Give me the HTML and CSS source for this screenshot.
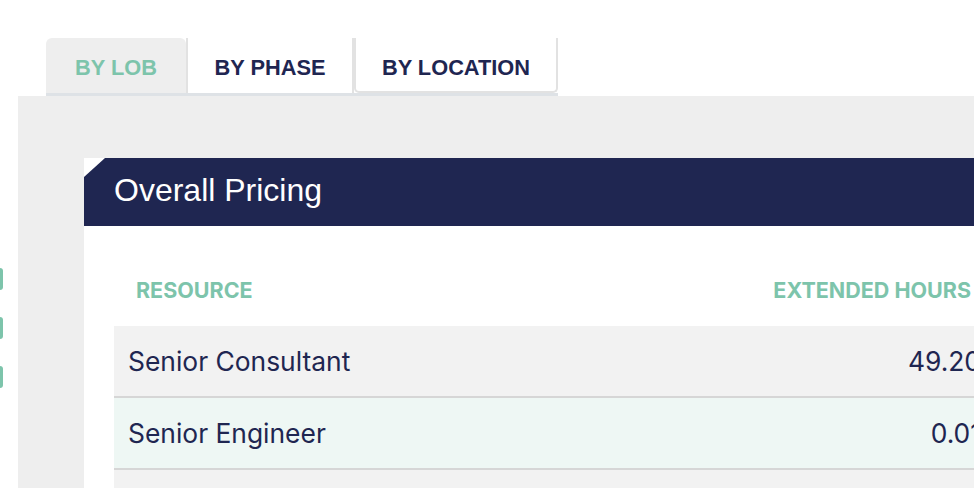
FILE: index.html
```html
<!DOCTYPE html>
<html>
<head>
<meta charset="utf-8">
<link rel="stylesheet" href="styles.css">
</head>
<body>
<div class="layout">
  <aside class="sidebar">
    <span class="side-btn"></span>
    <span class="side-btn"></span>
    <span class="side-btn"></span>
  </aside>
  <main class="main">
    <nav class="tabs">
      <div class="tab tab-active">BY LOB</div>
      <div class="tab tab-phase">BY PHASE</div>
      <div class="tab tab-location">BY LOCATION</div>
    </nav>
    <section class="panel">
      <div class="card">
        <div class="card-header">Overall Pricing</div>
        <div class="card-body">
          <div class="thead">
            <div class="th">RESOURCE</div>
            <div class="th th-num">EXTENDED HOURS</div>
          </div>
          <div class="tr tr-grey">
            <div class="td">Senior Consultant</div>
            <div class="td td-num">49.20</div>
          </div>
          <div class="tr tr-mint">
            <div class="td">Senior Engineer</div>
            <div class="td td-num">0.01</div>
          </div>
          <div class="tr tr-grey">
            <div class="td">Engineer</div>
            <div class="td td-num">0.00</div>
          </div>
        </div>
      </div>
    </section>
  </main>
</div>
</body>
</html>
```

FILE: styles.css
```css
html, body {
  margin: 0;
  padding: 0;
  background: #ffffff;
  overflow: hidden;
  width: 974px;
  height: 488px;
}

.layout {
  display: flex;
  align-items: stretch;
  height: 488px;
}

.sidebar {
  flex: none;
  width: 18px;
  display: flex;
  flex-direction: column;
  padding-top: 268px;
  gap: 27px;
  box-sizing: border-box;
}

.side-btn {
  display: block;
  width: 3px;
  height: 22px;
  background: #7dc4ab;
  border-radius: 0 3px 3px 0;
}

.main {
  flex: none;
  width: 1071px;
  display: flex;
  flex-direction: column;
}

.tabs {
  display: flex;
  align-self: flex-start;
  margin-top: 38px;
  margin-left: 28px;
  border-bottom: 3px solid #dee2e6;
  font-family: "Liberation Sans", Arial, sans-serif;
  font-weight: bold;
  font-size: 21.8px;
  color: #1f2651;
}

.tab {
  height: 55px;
  box-sizing: border-box;
  display: flex;
  align-items: center;
  justify-content: center;
  padding: 5px 0 0;
  background: #ffffff;
}

.tab-active {
  background: #eeeeee;
  color: #7dc4ab;
  border-radius: 6px 6px 0 0;
  width: 140px;
}

.tab-phase {
  border-left: 2px solid #e2e2e2;
  border-right: 2px solid #e2e2e2;
  width: 168px;
}

.tab-location {
  border: 2px solid #e2e2e2;
  border-top: none;
  border-radius: 0 0 5px 5px;
  width: 204px;
  padding-top: 7px;
}

.panel {
  flex: 1;
  background: #eeeeee;
  padding: 62px 66px 0;
}

.card {
  background: #ffffff;
  height: 100%;
}

.card-header {
  height: 68px;
  background: #1f2651;
  color: #ffffff;
  font-family: "Liberation Sans", Arial, sans-serif;
  font-size: 32px;
  display: flex;
  align-items: center;
  padding: 0 30px 4px;
  box-sizing: border-box;
  clip-path: polygon(21px 0, 100% 0, 100% 100%, 0 100%, 0 19px);
}

.card-body {
  padding: 0 30px;
  font-family: Inter, "Noto Sans", sans-serif;
  color: #1f2651;
}

.thead {
  display: flex;
  justify-content: space-between;
  height: 100px;
  box-sizing: border-box;
  padding: 52px 22px 0;
  font-weight: bold;
  font-size: 21.5px;
  line-height: 24px;
  color: #7dc4ab;
}

.tr {
  display: flex;
  justify-content: space-between;
  align-items: center;
  height: 72px;
  box-sizing: border-box;
  padding: 0 12px 0 14px;
  border-bottom: 2px solid #d6d6d6;
  font-size: 26.4px;
}

.tr-grey {
  background: #f2f2f2;
}

.tr-mint {
  background: #eef7f4;
}
```
